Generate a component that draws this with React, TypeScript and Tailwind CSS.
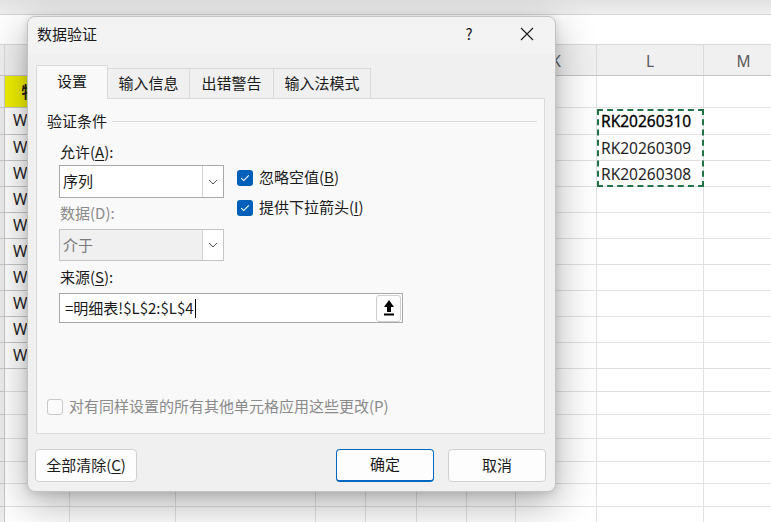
import React from "react";

// widths of the sheet columns behind the dialog (row header, A..M)
const colTemplate =
  "grid grid-cols-[5px_65px_106px_140px_50px_51px_50px_49px_81px_107px_80px]";

const rowHeights = [32, 27, 26, 26, 26, 26, 26, 26, 26, 26, 26, 23, 23, 24, 23, 22, 23, 23];

const lCodes = ["RK20260310", "RK20260309", "RK20260308"];

const Sheet = () => {
  return (
    <div className="relative flex flex-col font-['Noto_Sans','Noto_Sans_CJK_SC',sans-serif] text-[15.5px] text-[#1f1f1f]">
      <div className="h-[15px] border-b border-[#d2d2d2] bg-gradient-to-b from-[#e2e2e2] to-[#eeeeee]" />
      <div className="h-[29px] bg-white" />
      <div className={`${colTemplate} h-[32px] border-y border-t-[#d8d8d8] border-b-[#c4c4c4] bg-[#f0f0f0] text-[#5a5a5a]`}>
        {["", "", "", "", "", "", "", "", "K", "L", "M"].map((c, i) => (
          <div key={i} className="flex items-end justify-center border-r border-[#dadada] pb-[2px]">
            {c}
          </div>
        ))}
      </div>
      {rowHeights.map((h, r) => (
        <div key={r} className={colTemplate} style={{ height: h }}>
          {Array.from({ length: 11 }).map((_, c) => {
            if (c === 0) {
              return <div key={c} className="border-r border-b border-[#c8c8c8] bg-[#ececec]" />;
            }
            if (c === 1 && r === 0) {
              return (
                <div key={c} className="flex items-center justify-center border-r border-b border-[#c8c8c8] bg-[#f0f000] font-['Noto_Sans_CJK_SC',sans-serif] font-bold">
                  物料
                </div>
              );
            }
            if (c === 1 && r >= 1 && r <= 10) {
              return (
                <div key={c} className="flex items-center border-r border-b border-[#c8c8c8] pl-[8px]">
                  W
                </div>
              );
            }
            if (c === 9 && r >= 1 && r <= 3) {
              return (
                <div key={c} className={`flex items-center border-r border-b border-[#e1e1e1] pl-[4px] pt-[2px] ${r === 1 ? "text-black [-webkit-text-stroke:0.3px_black]" : ""}`}>
                  {lCodes[r - 1]}
                </div>
              );
            }
            return <div key={c} className="border-r border-b border-[#e1e1e1]" />;
          })}
        </div>
      ))}
      {/* copy marquee round L2:L4 */}
      <div className="absolute left-[597px] top-[109px] h-[78px] w-[107px] border-2 border-dashed border-[#217346]" />
    </div>
  );
};

const Chevron = () => (
  <svg width="10" height="6" viewBox="0 0 10 6" fill="none">
    <path d="M1 1l4 4 4-4" stroke="#555" strokeWidth="1" />
  </svg>
);

const Combo = ({ value, disabled }: { value: string; disabled?: boolean }) => (
  <div
    className={`flex w-[165px] border ${
      disabled
        ? "h-[32px] border-[#c6c6c6] bg-[#f0f0f0] text-[#7a7a7a]"
        : "h-[33px] border-[#a9a9a9] bg-white text-[#1a1a1a]"
    }`}
  >
    <div className="flex flex-1 items-center pb-[1px] pl-[3px]">{value}</div>
    <div className="flex w-[21px] items-center justify-center border-l border-[#d4d4d4] bg-white">
      <Chevron />
    </div>
  </div>
);

const Tick = () => (
  <span className="flex h-[16px] w-[16px] items-center justify-center rounded-[3px] bg-[#005fb8]">
    <svg width="10" height="8" viewBox="0 0 10 8" fill="none">
      <path d="M1.2 4.2l2.5 2.4L8.8 1.4" stroke="#fff" strokeWidth="1.1" />
    </svg>
  </span>
);

const DialogButton = ({
  children,
  primary,
  className,
}: {
  children: React.ReactNode;
  primary?: boolean;
  className?: string;
}) => (
  <button
    type="button"
    className={`flex h-[33px] items-center justify-center rounded-[4px] bg-[#fdfdfd] pb-[2px] ${
      primary ? "border border-b-2 border-[#0067c0]" : "border border-[#d0d0d0]"
    } ${className ?? ""}`}
  >
    {children}
  </button>
);

const tabs = [
  { label: "设置", w: "w-[72px]" },
  { label: "输入信息", w: "w-[82px]" },
  { label: "出错警告", w: "w-[84px]" },
  { label: "输入法模式", w: "w-[97px]" },
];

const ValidationDialog = () => {
  return (
    <div className="absolute left-[27px] top-[16px] flex h-[476px] w-[529px] flex-col rounded-[8px] border border-[#c2c2c2] bg-[#f0f0f0] font-['Noto_Sans_CJK_SC',sans-serif] text-[15px] leading-[20px] text-[#1a1a1a] shadow-[0_12px_40px_rgba(0,0,0,0.32),0_2px_8px_rgba(0,0,0,0.12)]">
      {/* title bar */}
      <div className="flex h-[37px] items-center rounded-t-[8px] bg-[#f3f3f4] pb-[4px] pl-[9px]">
        <span>数据验证</span>
        <span className="ml-auto flex w-[40px] justify-center">?</span>
        <span className="ml-[18px] mr-[8px] flex w-[40px] justify-center">
          <svg width="14" height="14" viewBox="0 0 14 14" fill="none">
            <path d="M1 1l12 12M13 1L1 13" stroke="#1a1a1a" strokeWidth="1.1" />
          </svg>
        </span>
      </div>

      {/* tabs */}
      <div className="ml-[8px] mt-[11px] flex items-end">
        {tabs.map((t, i) =>
          i === 0 ? (
            <div
              key={t.label}
              className={`${t.w} relative z-10 -mb-px flex h-[34px] items-center justify-center border border-b-0 border-[#d9d9d9] bg-[#f9f9f9] pb-[3px]`}
            >
              {t.label}
            </div>
          ) : (
            <div
              key={t.label}
              className={`${t.w} flex h-[30px] items-center justify-center border border-l-0 border-b-0 border-[#dadada] bg-[#f0f0f0] pb-[1px]`}
            >
              {t.label}
            </div>
          )
        )}
      </div>

      {/* panel */}
      <div className="ml-[8px] flex h-[336px] w-[509px] flex-col border border-[#dadada] bg-[#f9f9f9]">
        <div className="mt-[12px] flex h-[20px] items-center pl-[10px] pr-[7px]">
          <span>验证条件</span>
          <span className="ml-[5px] mt-[1px] h-px flex-1 bg-[#dcdcdc]" />
        </div>

        <div className="ml-[22px] mt-[11px] flex">
          <div className="flex flex-col">
            <span className="pl-[1px]">
              允许(<span className="underline underline-offset-2">A</span>):
            </span>
            <div className="mt-[3px]">
              <Combo value="序列" />
            </div>
            <span className="mt-[5px] pl-[1px] text-[#8a8a8a]">数据(D):</span>
            <div className="mt-[6px]">
              <Combo value="介于" disabled />
            </div>
          </div>
          <div className="ml-[13px] mt-[27px] flex flex-col gap-[13px]">
            <div className="flex h-[17px] items-center gap-[6px]">
              <Tick />
              <span className="-mt-[2px]">
                忽略空值(<span className="underline underline-offset-2">B</span>)
              </span>
            </div>
            <div className="flex h-[17px] items-center gap-[6px]">
              <Tick />
              <span className="-mt-[2px]">
                提供下拉箭头(<span className="underline underline-offset-2">I</span>)
              </span>
            </div>
          </div>
        </div>

        <span className="ml-[23px] mt-[6px]">
          来源(<span className="underline underline-offset-2">S</span>):
        </span>
        <div className="ml-[22px] mt-[6px] flex h-[30px] w-[344px] items-center border border-[#a9a9a9] bg-white pl-[5px] pr-[1px]">
          <span className="-mt-[1px]">=明细表!$L$2:$L$4</span>
          <span className="ml-[1px] h-[19px] w-px bg-black" />
          <span className="ml-auto flex h-[27px] w-[25px] items-center justify-center rounded-[3px] border border-[#cfcfcf] bg-[#fdfdfd]">
            <svg width="12" height="18" viewBox="0 0 12 18" fill="none">
              <path d="M6 1L11 8H8V13H4V8H1Z" fill="#000" />
              <rect x="1" y="14.5" width="10" height="2" fill="#000" />
            </svg>
          </span>
        </div>

        <div className="mb-[17px] ml-[10px] mt-auto flex items-center gap-[6px] text-[#8a8a8a]">
          <span className="h-[16px] w-[16px] rounded-[3px] border border-[#c8c8c8] bg-[#fbfbfb]" />
          <span className="-mt-[2px]">对有同样设置的所有其他单元格应用这些更改(P)</span>
        </div>
      </div>

      {/* footer buttons */}
      <div className="mt-[15px] flex px-[7px]">
        <DialogButton className="w-[102px]">
          <span>
            全部清除(<span className="underline underline-offset-2">C</span>)
          </span>
        </DialogButton>
        <DialogButton primary className="ml-auto w-[98px]">
          确定
        </DialogButton>
        <DialogButton className="ml-[14px] mr-[2px] w-[98px]">取消</DialogButton>
      </div>
    </div>
  );
};

const App = () => {
  return (
    <div className="relative h-[522px] w-[771px] overflow-hidden bg-white">
      <Sheet />
      <ValidationDialog />
    </div>
  );
};

export default App;
